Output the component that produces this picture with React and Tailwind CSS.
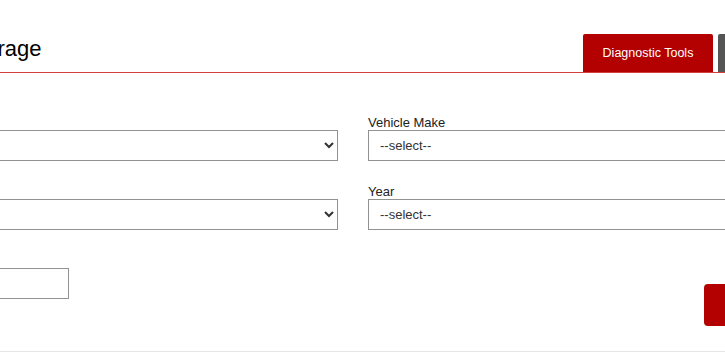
import React from 'react';

const font = { fontFamily: '"Liberation Sans", Arial, sans-serif' };

function Field({ label, children }) {
  return (
    <div className="flex flex-col">
      <label className="text-[13px] leading-[15px] text-[#222] whitespace-nowrap">{label}</label>
      {children}
    </div>
  );
}

function Select() {
  return (
    <select className="h-[31px] w-full border border-[#929292] bg-white pl-[7px] text-[13px] text-[#333]">
      <option>--select--</option>
    </select>
  );
}

export default function App() {
  return (
    <div className="w-[725px] h-[358px] overflow-hidden bg-white" style={font}>
      <div className="ml-[-142px] w-[990px]">
        {/* Title + tabs */}
        <div className="flex items-start justify-between pt-[34px] border-b border-[#d43f3f]">
          <h1 className="mt-[2px] ml-[11px] text-[22px] leading-[26px] text-black">Vehicle Coverage</h1>
          <div className="flex gap-[5px]">
            <a href="#" className="flex h-[38px] w-[130px] items-center justify-center rounded-t-[2px] bg-[#b30000] text-[12.5px] text-white">
              Diagnostic Tools
            </a>
            <a href="#" className="flex h-[38px] w-[130px] items-center justify-center rounded-t-[2px] bg-[#555555] text-[12.5px] text-white">
              Software
            </a>
          </div>
        </div>

        {/* Form */}
        <div className="mt-[42px] grid grid-cols-2 gap-x-[30px] gap-y-[23px]">
          <Field label="Category">
            <Select />
          </Field>
          <Field label="Vehicle Make">
            <Select />
          </Field>
          <Field label="Region">
            <Select />
          </Field>
          <Field label="Year">
            <Select />
          </Field>
          <Field label="Model">
            <input type="text" className="h-[31px] w-[211px] border border-[#929292] bg-white px-[10px] text-[13px]" />
          </Field>
          <div className="flex justify-end pt-[31px]">
            <button className="h-[42px] w-[144px] rounded-[4px] bg-[#b30000] text-[14px] text-white">Search</button>
          </div>
        </div>

        <div className="mt-[25px] border-t border-[#e6e6e6]" />
      </div>
    </div>
  );
}
